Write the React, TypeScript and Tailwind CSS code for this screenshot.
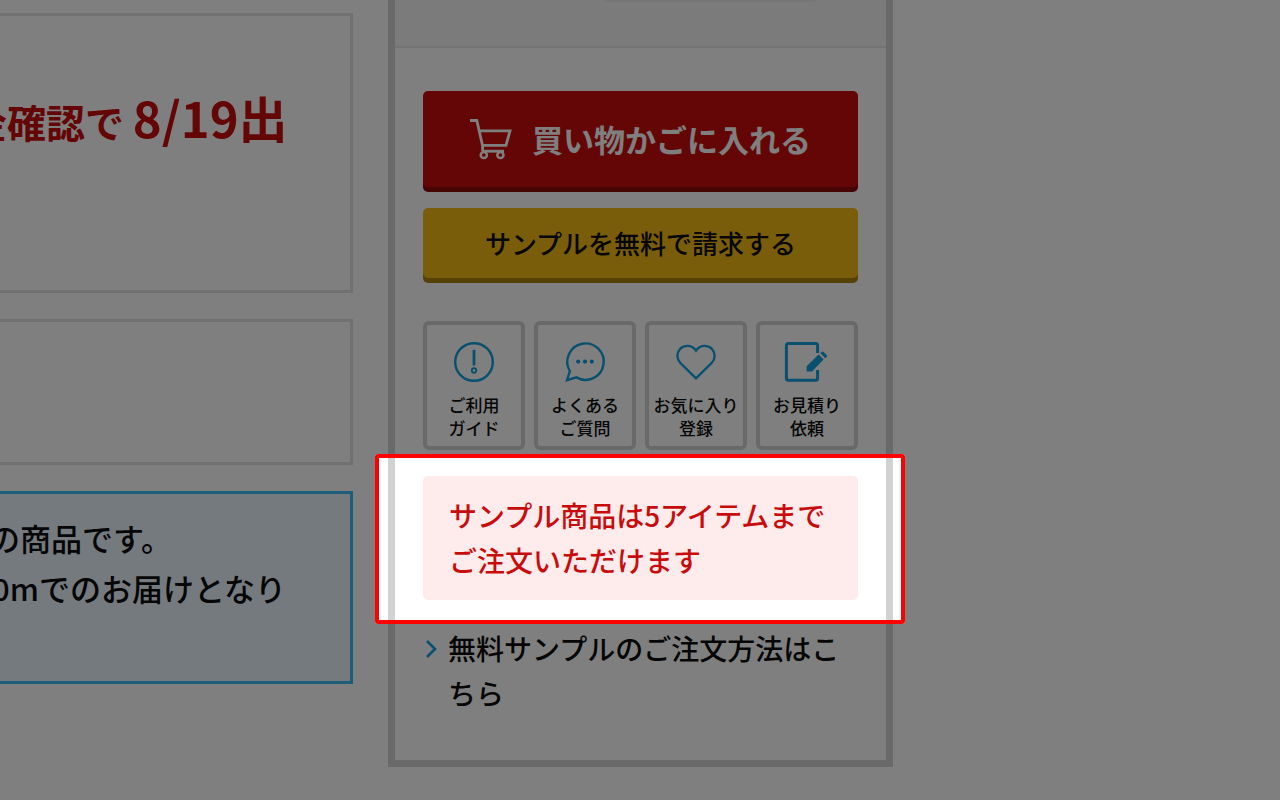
import type { ReactNode } from "react";

function CartIcon() {
  return (
    <svg width="42" height="41" viewBox="0 0 42 41" fill="none" stroke="currentColor" strokeWidth="2.8" aria-hidden="true">
      <path d="M0 1.5H6.8L12.6 27V32.2" />
      <path d="M8.8 11.8H40L36 26.4H12.4" />
      <path d="M13 32.2H34" />
      <circle cx="13.8" cy="36" r="3.1" strokeWidth="2.5" />
      <circle cx="30.4" cy="36" r="3.1" strokeWidth="2.5" />
    </svg>
  );
}

function GuideIcon() {
  return (
    <svg width="42" height="42" viewBox="0 0 42 42" fill="none" stroke="currentColor" strokeWidth="2.4" aria-hidden="true">
      <circle cx="21" cy="21" r="18.8" />
      <path d="M21 8.8V24.5" strokeWidth="2.8" />
      <circle cx="21" cy="29.5" r="2.2" strokeWidth="1.9" />
    </svg>
  );
}

function ChatIcon() {
  return (
    <svg width="42" height="42" viewBox="0 0 42 42" fill="none" stroke="currentColor" strokeWidth="2.4" aria-hidden="true">
      <path d="M5.9 30A18.2 18.2 0 1 1 12.4 36.4L3 39.2Z" strokeLinejoin="miter" />
      <g fill="currentColor" stroke="none">
        <circle cx="14.2" cy="20.6" r="2.1" />
        <circle cx="21" cy="20.6" r="2.1" />
        <circle cx="27.8" cy="20.6" r="2.1" />
      </g>
    </svg>
  );
}

function HeartIcon() {
  return (
    <svg width="42" height="42" viewBox="0 0 42 42" fill="none" stroke="currentColor" strokeWidth="2.4" aria-hidden="true">
      <path d="M21 37.4L5.4 22A10.2 10.2 0 0 1 4.8 8.2C8.8 3.6 17 3.6 21 9.6C25 3.6 33.2 3.6 37.2 8.2A10.2 10.2 0 0 1 36.6 22Z" />
    </svg>
  );
}

function EstimateIcon() {
  return (
    <svg width="42" height="42" viewBox="0 0 42 42" fill="none" aria-hidden="true">
      <path
        d="M31.6 12V4.4Q31.6 2.4 29.6 2.4H2.4Q0.4 2.4 0.4 4.4V37.2Q0.4 39.2 2.4 39.2H29.6Q31.6 39.2 31.6 37.2V29"
        stroke="currentColor"
        strokeWidth="3"
      />
      <path d="M20.6 25.2L32.6 13.6L37.6 18.6L26 30.6H20.6Z" fill="currentColor" />
      <path d="M34.2 12L35.8 10.8Q36.6 10.2 37.4 10.8L40.8 14.2Q41.4 15 40.8 15.8L39.4 17.2Z" fill="currentColor" />
    </svg>
  );
}

function Shortcut({ icon, lines }: { icon: ReactNode; lines: [string, string] }) {
  return (
    <a
      href="#"
      className="flex flex-col items-center rounded-md border-4 border-[#d2d2d2] bg-white pt-4 pb-[7px] text-center text-[17px] leading-[23px] whitespace-nowrap text-[#0c0c0c]"
    >
      <span className="mb-2.5 text-[#10a0dc] [&>svg]:block [&>svg]:overflow-visible">{icon}</span>
      <span>{lines[0]}</span>
      <span>{lines[1]}</span>
    </a>
  );
}

export default function App() {
  return (
    <div className="relative grid min-h-screen grid-cols-[353fr_505fr_352fr] items-start gap-[35px] overflow-hidden bg-white font-['Noto_Sans_CJK_JP','Noto_Sans',sans-serif] font-medium text-[#0c0c0c]">
      <div className="flex min-w-0 flex-col gap-[26px] pt-[13px]">
        <section className="overflow-hidden border-[3px] border-l-0 border-[#e2e2e2] pt-[66px] pb-[134px]">
          <p className="-ml-8 text-[39px] leading-[70px] font-bold whitespace-nowrap text-[#c80c0c]">
            金確認で <span className="text-[49px]">8/19出</span>
          </p>
        </section>
        <section className="border-[3px] border-l-0 border-[#e2e2e2] py-[70px]" />
        <section className="overflow-hidden border-[3px] border-l-0 border-[#36bcf0] bg-[#eaf5fc] pt-[19px] pb-[68px] text-[31px] leading-[50px] whitespace-nowrap">
          <p className="-ml-[11px]">の商品です。</p>
          <p className="-ml-2">0mでのお届けとなり</p>
        </section>
      </div>

      <main className="border-x-[7px] border-b-[7px] border-[#d2d2d2] bg-white">
        <div className="border-b-2 border-[#e8e8e8] bg-[#f7f7f7] pb-11 pl-[210px]">
          <div className="w-[210px] border-x-2 border-b-2 border-[#ececec]" />
        </div>
        <div className="px-7 pt-[43px] pb-11">
          <button
            type="button"
            className="flex w-full items-center justify-center gap-5 rounded-[5px] bg-[#c80c0c] py-[25px] text-[31px] leading-[46px] font-bold whitespace-nowrap text-white shadow-[0_5px_0_#8c0808]"
          >
            <CartIcon />
            買い物かごに入れる
          </button>
          <button
            type="button"
            className="mt-[21px] w-full rounded-[5px] bg-[#f2ba16] py-[15px] text-[26px] leading-10 whitespace-nowrap shadow-[0_5px_0_#ac820e]"
          >
            サンプルを無料で請求する
          </button>

          <nav className="mt-[43px] grid grid-cols-4 gap-[9px]">
            <Shortcut icon={<GuideIcon />} lines={["ご利用", "ガイド"]} />
            <Shortcut icon={<ChatIcon />} lines={["よくある", "ご質問"]} />
            <Shortcut icon={<HeartIcon />} lines={["お気に入り", "登録"]} />
            <Shortcut icon={<EstimateIcon />} lines={["お見積り", "依頼"]} />
          </nav>

          <div className="relative mt-[26px]">
            <p className="rounded-[5px] bg-[#feebeb] px-[26px] py-[17px] text-[28px] leading-[45px] whitespace-nowrap text-[#c80c0c]">
              サンプル商品は5アイテムまで
              <br />
              ご注文いただけます
            </p>
            <div className="pointer-events-none absolute -top-[22px] -right-[47px] -bottom-6 -left-12 z-10 rounded-[3px] border-4 border-[#ff0000] shadow-[0_0_0_9999px_rgba(0,0,0,0.5)]" />
          </div>

          <a href="#" className="mt-[26px] flex gap-[11px] pl-[3px] text-[28px] leading-[45px]">
            <svg className="mt-3.5 shrink-0" width="11" height="18" viewBox="0 0 11 18" fill="none" stroke="#10a0dc" strokeWidth="2.6" aria-hidden="true">
              <path d="M1 1L9 9L1 17" />
            </svg>
            <span className="-mr-2">無料サンプルのご注文方法はこちら</span>
          </a>
        </div>
      </main>
    </div>
  );
}
